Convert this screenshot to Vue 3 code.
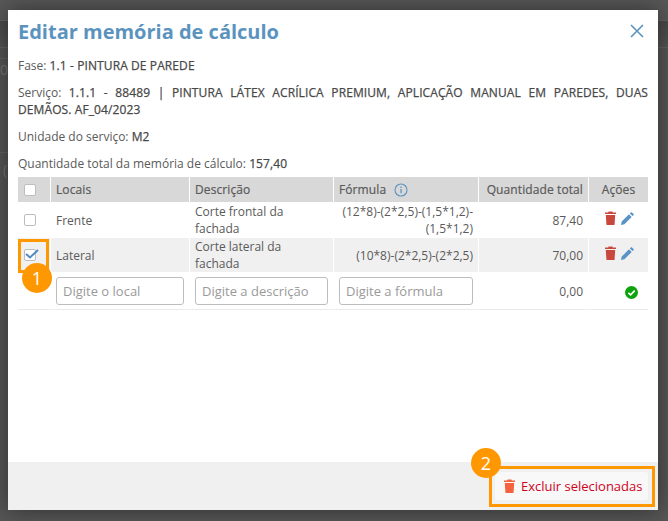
<script setup>
const rows = [
  { local: 'Frente', desc: 'Corte frontal da fachada', formula: '(12*8)-(2*2,5)-(1,5*1,2)-(1,5*1,2)', total: '87,40', checked: false },
  { local: 'Lateral', desc: 'Corte lateral da fachada', formula: '(10*8)-(2*2,5)-(2*2,5)', total: '70,00', checked: true }
]
</script>

<template>
  <div class="page">
    <div class="backdrop">
      <div class="bg-line first"></div>
      <div class="bg-line"></div>
      <div class="bg-line short"></div>
      <div class="bg-line short lower"></div>
      <span class="bg-text bg-text-a">0</span>
      <span class="bg-text bg-text-b">(</span>
    </div>

    <div class="modal">
      <header class="modal-header">
        <h1>Editar memória de cálculo</h1>
        <svg class="close" width="16" height="16" viewBox="0 0 16 16">
          <path d="M2 2 L14 14 M14 2 L2 14" stroke="#5b93bf" stroke-width="1.6" fill="none" />
        </svg>
      </header>

      <div class="modal-body">
        <p>Fase: <span class="val">1.1 - PINTURA DE PAREDE</span></p>
        <p class="just">Serviço: <span class="val">1.1.1 - 88489 | PINTURA LÁTEX ACRÍLICA PREMIUM, APLICAÇÃO MANUAL EM PAREDES, DUAS DEMÃOS. AF_04/2023</span></p>
        <p>Unidade do serviço: <span class="val">M2</span></p>
        <p>Quantidade total da memória de cálculo: <span class="val">157,40</span></p>

        <table>
          <colgroup>
            <col class="col-check" />
            <col class="col-local" />
            <col class="col-desc" />
            <col class="col-formula" />
            <col class="col-total" />
            <col class="col-actions" />
          </colgroup>
          <thead>
            <tr>
              <th class="cell-check"><span class="check"></span></th>
              <th>Locais</th>
              <th>Descrição</th>
              <th>
                <span class="th-info">
                  Fórmula
                  <svg width="14" height="14" viewBox="0 0 14 14">
                    <circle cx="7" cy="7" r="6" stroke="#5b93bf" stroke-width="1.1" fill="none" />
                    <rect x="6.4" y="6" width="1.3" height="4.2" fill="#5b93bf" />
                    <rect x="6.4" y="3.6" width="1.3" height="1.4" fill="#5b93bf" />
                  </svg>
                </span>
              </th>
              <th class="r">Quantidade total</th>
              <th class="c">Ações</th>
            </tr>
          </thead>
          <tbody>
            <tr v-for="row in rows" :key="row.local" :class="{ selected: row.checked }">
              <td class="cell-check">
                <span class="check">
                  <svg v-if="row.checked" class="tick" width="14" height="10" viewBox="0 0 14 10">
                    <path d="M1 5 L5 8.5 L13 1" stroke="#4f8ac0" stroke-width="2" fill="none" />
                  </svg>
                </span>
              </td>
              <td>{{ row.local }}</td>
              <td>{{ row.desc }}</td>
              <td class="r">{{ row.formula }}</td>
              <td class="r">{{ row.total }}</td>
              <td class="c">
                <span class="actions">
                  <svg width="11" height="14" viewBox="0 0 11 13" preserveAspectRatio="none">
                    <path d="M3.6 0.4 H7.4 L7.9 1.4 H11 V2.8 H0 V1.4 H3.1 Z M0.8 3.6 H10.2 L9.6 12.2 Q9.5 13 8.7 13 H2.3 Q1.5 13 1.4 12.2 Z" fill="#c9483e" />
                  </svg>
                  <svg width="13" height="13" viewBox="0 0 13 13">
                    <path d="M0 13 L0.7 9.6 L8 2.3 L10.7 5 L3.4 12.3 Z M8.9 1.4 L10 0.3 Q10.4 0 10.8 0.3 L12.7 2.2 Q13 2.6 12.7 3 L11.6 4.1 Z" fill="#5b93c7" />
                  </svg>
                </span>
              </td>
            </tr>
            <tr class="input-row">
              <td></td>
              <td><input placeholder="Digite o local" /></td>
              <td><input placeholder="Digite a descrição" /></td>
              <td><input placeholder="Digite a fórmula" /></td>
              <td class="r">0,00</td>
              <td class="ok">
                <svg width="13" height="13" viewBox="0 0 13 13">
                  <circle cx="6.5" cy="6.5" r="6.5" fill="#0ca30c" />
                  <path d="M3.4 6.8 L5.6 8.9 L9.7 4.6" stroke="#fff" stroke-width="1.7" fill="none" />
                </svg>
              </td>
            </tr>
          </tbody>
        </table>
      </div>

      <footer class="modal-footer">
        <button class="btn-delete">
          <svg width="11" height="14" viewBox="0 0 11 13" preserveAspectRatio="none">
            <path d="M3.6 0.4 H7.4 L7.9 1.4 H11 V2.8 H0 V1.4 H3.1 Z M0.8 3.6 H10.2 L9.6 12.2 Q9.5 13 8.7 13 H2.3 Q1.5 13 1.4 12.2 Z" fill="#f4623f" />
          </svg>
          Excluir selecionadas
        </button>
      </footer>
    </div>

    <div class="mark mark-check"></div>
    <div class="badge badge-1">1</div>
    <div class="mark mark-btn"></div>
    <div class="badge badge-2">2</div>
  </div>
</template>

<style>
html, body {
  margin: 0;
  overflow: hidden;
}
</style>

<style scoped>
.page {
  position: relative;
  width: 668px;
  height: 521px;
  overflow: hidden;
  font-family: "Open Sans", sans-serif;
  font-size: 12px;
  color: #5a5a5a;
  background: #585858;
}

.backdrop {
  height: 100%;
  background: linear-gradient(#484848, #565656 30px);
}

.bg-line {
  height: 1px;
  margin-bottom: 26px;
  background: #626262;
}

.bg-line.first {
  margin-top: 20px;
}

.bg-line.short {
  width: 8px;
  margin-bottom: 0;
  margin-top: -16px;
}

.bg-line.short.lower {
  margin-top: 93px;
}

.bg-text {
  position: absolute;
  left: 0;
  color: #757575;
  font-size: 14px;
}

.bg-text-a {
  top: 60px;
}

.bg-text-b {
  top: 160px;
  left: 3px;
}

.modal {
  position: absolute;
  left: 8px;
  top: 10px;
  width: 650px;
  height: 500px;
  background: #fff;
  display: flex;
  flex-direction: column;
  box-shadow: 0 0 22px rgba(0, 0, 0, 0.45);
}

.modal-header {
  display: flex;
  align-items: center;
  justify-content: space-between;
  height: 42px;
  padding: 0 13px 0 10px;
}

h1 {
  margin: 0;
  font-size: 20px;
  font-weight: 700;
  color: #5b93bf;
}

.modal-body {
  flex: 1;
  padding: 5px 10px 0;
}

p {
  margin: 0 0 10px;
  line-height: 17px;
}

.val {
  color: #484848;
  letter-spacing: 0.1px;
  -webkit-text-stroke: 0.25px #484848;
}

.just {
  text-align: justify;
}

table {
  width: 630px;
  margin-top: -5px;
  border-collapse: separate;
  border-spacing: 0;
  table-layout: fixed;
  line-height: 17px;
}

.col-check { width: 33px; }
.col-local { width: 139px; }
.col-desc { width: 144px; }
.col-formula { width: 145px; }
.col-total { width: 110px; }
.col-actions { width: 59px; }

th {
  height: 26px;
  padding: 0 5px;
  background: #d8d8d8;
  border-right: 1px solid #fff;
  border-bottom: 1px solid #fff;
  font-weight: 400;
  letter-spacing: 0.1px;
  -webkit-text-stroke: 0.2px #5a5a5a;
  text-align: left;
  white-space: nowrap;
  box-sizing: border-box;
}

th:last-child,
td:last-child {
  border-right: 0;
}

td {
  height: 35px;
  padding: 0 5px;
  border-right: 1px solid #fff;
  border-bottom: 1px solid #fff;
  box-sizing: border-box;
}

.selected td {
  background: #f0f0f0;
}

.input-row td {
  height: 37px;
  border-bottom: 1px solid #eaeaea;
}

th.c,
td.c {
  padding: 0;
  text-align: center;
}

th.r,
td.r {
  text-align: right;
}

th.cell-check,
td.cell-check {
  padding: 0 0 0 6px;
}

.ok {
  padding-right: 10px;
  text-align: right;
}

.ok svg {
  display: inline-block;
  vertical-align: middle;
}

.check {
  position: relative;
  display: block;
  width: 12px;
  height: 12px;
  box-sizing: border-box;
  background: #fff;
  border: 1px solid #bdbdbd;
  border-radius: 2px;
}

.tick {
  position: absolute;
  left: 0;
  top: -1px;
}

.th-info {
  display: inline-flex;
  align-items: center;
  gap: 8px;
}

.actions {
  display: inline-flex;
  align-items: center;
  gap: 5px;
  margin-left: 2px;
}

input {
  display: block;
  width: 100%;
  height: 28px;
  padding: 0 6px;
  box-sizing: border-box;
  border: 1px solid #bdbdbd;
  border-radius: 3px;
  font: 13px "Open Sans", sans-serif;
  color: #4a4a4a;
  outline: none;
}

input::placeholder {
  color: #9a9a9a;
  opacity: 1;
}

.modal-footer {
  display: flex;
  justify-content: flex-end;
  align-items: center;
  height: 48px;
  padding-right: 10px;
  background: #f0f0f0;
}

.btn-delete {
  display: flex;
  align-items: center;
  gap: 6px;
  height: 28px;
  width: 153px;
  padding: 0 0 0 9px;
  border: 0;
  border-radius: 3px;
  background: #f8f8f8;
  color: #d0021b;
  font: 13px "Open Sans", sans-serif;
}

.mark {
  position: absolute;
  border: 3px solid #ff9800;
  box-sizing: border-box;
}

.mark-check {
  left: 18px;
  top: 239px;
  width: 31px;
  height: 34px;
}

.mark-btn {
  left: 489px;
  top: 466px;
  width: 166px;
  height: 41px;
}

.badge {
  position: absolute;
  width: 30px;
  height: 30px;
  border-radius: 50%;
  background: #ff9800;
  color: #fff;
  font-size: 18px;
  line-height: 30px;
  text-align: center;
}

.badge-1 {
  left: 22px;
  top: 263px;
}

.badge-2 {
  left: 471px;
  top: 448px;
}
</style>
